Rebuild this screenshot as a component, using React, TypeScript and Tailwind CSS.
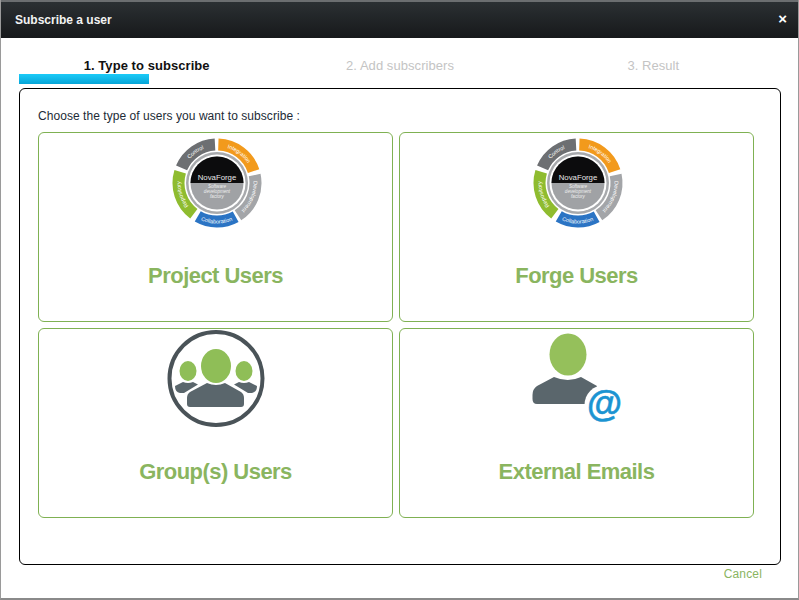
const FONT = "font-['Liberation_Sans',Arial,sans-serif]";

function polar(r: number, deg: number) {
  const a = ((deg - 90) * Math.PI) / 180;
  return `${(48 + r * Math.cos(a)).toFixed(2)} ${(48 + r * Math.sin(a)).toFixed(2)}`;
}

function arc(r: number, from: number, to: number) {
  return `M${polar(r, from)} A${r} ${r} 0 0 1 ${polar(r, to)}`;
}

const segments = [
  { id: "int", label: "Integration", from: 2, to: 72, color: "#f29a1c" },
  { id: "dev", label: "Development", from: 78, to: 147, color: "#a3a5a8" },
  { id: "col", label: "Collaboration", from: 210, to: 151, color: "#2b74c4", reverse: true },
  { id: "rep", label: "Repository", from: 217, to: 287, color: "#8fbc2f" },
  { id: "ctl", label: "Control", from: 293, to: 357, color: "#6d6f72" },
];

function NovaForgeLogo() {
  return (
    <svg width="96" height="96" viewBox="0 0 96 96">
      {segments.map((s) => (
        <g key={s.id}>
          <path
            d={s.reverse ? arc(38.5, s.to, s.from) : arc(38.5, s.from, s.to)}
            fill="none"
            stroke={s.color}
            strokeWidth="12"
          />
          <path
            id={`logo-${s.id}`}
            d={
              s.reverse
                ? `M${polar(40.5, s.from)} A40.5 40.5 0 0 0 ${polar(40.5, s.to)}`
                : arc(36.5, s.from, s.to)
            }
            fill="none"
          />
          <text fontSize="5.5" fill="#fff" fontFamily="Liberation Sans, sans-serif" textAnchor="middle">
            <textPath href={`#logo-${s.id}`} startOffset="50%">
              {s.label}
            </textPath>
          </text>
        </g>
      ))}
      <circle cx="48" cy="48" r="31" fill="#a8aaad" />
      <circle cx="48" cy="48" r="28.5" fill="#fff" />
      <circle cx="48" cy="48" r="26.5" fill="#a0a2a5" />
      <path d="M21.5 48 A26.5 26.5 0 0 1 74.5 48 Z" fill="#0c0c0d" />
      <text x="48" y="44.5" fontSize="7.8" fill="#e8e8e8" textAnchor="middle" fontFamily="Liberation Sans, sans-serif">
        NovaForge
      </text>
      <text fontSize="4.6" fill="#efefef" textAnchor="middle" fontFamily="Liberation Sans, sans-serif" fontStyle="italic">
        <tspan x="48" y="53">Software</tspan>
        <tspan x="48" y="58">development</tspan>
        <tspan x="48" y="63">factory</tspan>
      </text>
    </svg>
  );
}

function GroupIcon() {
  return (
    <svg width="100" height="100" viewBox="0 0 100 100">
      <circle cx="50" cy="49.5" r="46.5" fill="none" stroke="#4a5358" strokeWidth="4" />
      <ellipse cx="50" cy="37" rx="15" ry="17" fill="#8fbe57" />
      <ellipse cx="22" cy="42" rx="8.5" ry="10" fill="#8fbe57" />
      <ellipse cx="78" cy="42" rx="8.5" ry="10" fill="#8fbe57" />
      <path d="M9 57 L17 53 Q22 55 27 53 L32 55.5 L18 64 L14 64 Q9 63 9 57Z" fill="#5a666c" />
      <path d="M91 57 L83 53 Q78 55 73 53 L68 55.5 L82 64 L86 64 Q91 63 91 57Z" fill="#5a666c" />
      <path
        d="M21 69 Q21 65 24 63 L41 54 Q50 58 59 54 L75 63 Q78 65 78 69 L78 75 Q78 78 75 78 L24 78 Q21 78 21 75Z"
        fill="#5a666c"
      />
    </svg>
  );
}

function ExternalIcon() {
  return (
    <svg width="100" height="100" viewBox="0 0 100 100">
      <ellipse cx="41" cy="25.5" rx="18.5" ry="21" fill="#95c05b" />
      <path
        d="M5.5 66 Q5.5 60 10 57 L27 48 Q41 54 54 48 L70 57 L70 75 L10 75 Q5.5 75 5.5 70Z"
        fill="#5a666c"
      />
      <circle cx="77.5" cy="76" r="20" fill="#fff" />
      <text
        x="77.5"
        y="87"
        fontSize="36"
        fontWeight="700"
        fill="#1b94d2"
        stroke="#1b94d2"
        strokeWidth="0.5"
        textAnchor="middle"
        fontFamily="Liberation Sans, sans-serif"
      >
        @
      </text>
    </svg>
  );
}

function Card({ title, icon, top }: { title: string; icon: React.ReactNode; top: string }) {
  return (
    <button className="flex h-[190px] flex-col items-center rounded-[6px] border border-[#7fb152] bg-white">
      <div className={`flex h-[128px] w-full justify-center ${top}`}>{icon}</div>
      <div className="text-[22px] leading-[30px] font-bold tracking-[-0.54px] text-[#8ab55f]">{title}</div>
    </button>
  );
}

export default function App() {
  return (
    <div className={`${FONT} flex h-[600px] w-[799px] flex-col overflow-hidden border-x border-b-2 border-x-[#9a9a9a] border-b-[#8a8a8a] bg-white`}>
      <div className="flex h-[38px] shrink-0 items-center justify-between border-t-2 border-t-[#6b6e70] bg-gradient-to-b from-[#2b3033] to-[#17191b] pr-[11px] pl-[14px]">
        <span className="text-[12px] font-bold text-[#f2f2f2]">Subscribe a user</span>
        <span className="mb-[3px] text-[15px] leading-none font-bold text-white">×</span>
      </div>

      <div className="mt-[18px] grid h-[18px] grid-cols-3 pr-[18px] pl-[19px] text-[13px] leading-[19px] tracking-[0.06px]">
        <span className="text-center font-bold text-[#111]">1. Type to subscribe</span>
        <span className="text-center text-[#c4c4c4]">2. Add subscribers</span>
        <span className="text-center text-[#c4c4c4]">3. Result</span>
      </div>
      <div className="ml-[18px] h-[10px] w-[130px] bg-gradient-to-b from-[#1ccbf8] to-[#05a5d8]" />

      <div className="mt-[4px] ml-[18px] h-[477px] w-[762px] rounded-[6px] border border-black px-[18px] pt-[19px]">
        <p className="text-[12px] leading-[16px] tracking-[0.05px] text-[#222b36]">Choose the type of users you want to subscribe :</p>
        <div className="mt-[8px] grid w-[716px] grid-cols-2 gap-[6px]">
          <Card title="Project Users" icon={<NovaForgeLogo />} top="pt-[2px] pl-[3px]" />
          <Card title="Forge Users" icon={<NovaForgeLogo />} top="pt-[2px] pl-[3px]" />
          <Card title="Group(s) Users" icon={<GroupIcon />} top="pt-0" />
          <Card title="External Emails" icon={<ExternalIcon />} top="pt-0" />
        </div>
      </div>

      <div className="mt-[1px] pr-[36px] text-right text-[12px] leading-[16px] tracking-[0.15px] text-[#8ab55f]">Cancel</div>
    </div>
  );
}
